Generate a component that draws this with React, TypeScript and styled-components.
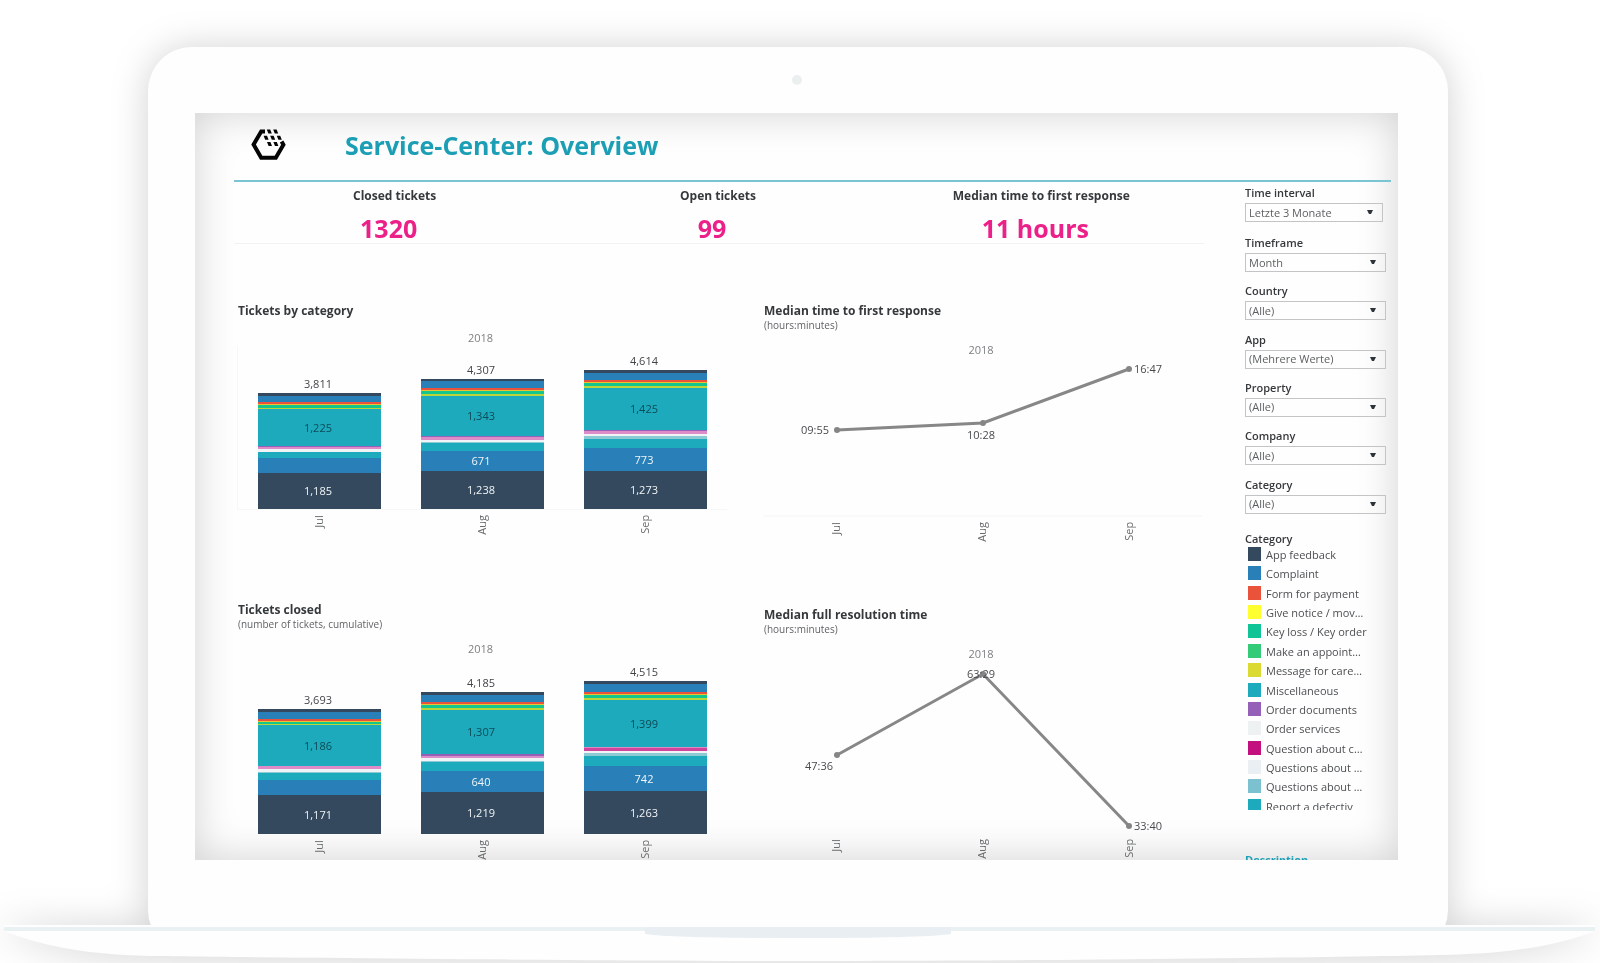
import React from "react";
import styled, { createGlobalStyle } from "styled-components";

const GlobalStyle = createGlobalStyle`
  *, *::before, *::after { box-sizing: border-box; }
  body {
    margin: 0;
    background: #fff;
    color: #36393c;
    font-family: "Open Sans", "Noto Sans", sans-serif;
    font-size: 11px;
    line-height: 16px;
  }
  h1, h2, h3, p, ul, dl, dd, figure { margin: 0; padding: 0; }
  ul { list-style: none; }
`;

/* ---------- laptop ---------- */

const Page = styled.div`
  min-height: 100vh;
  padding-top: 47px;
  overflow: hidden;
`;

const Laptop = styled.div`
  filter: drop-shadow(0 1px 18px rgba(0, 0, 0, 0.18));
`;

const Lid = styled.div`
  width: 81.25%;
  margin-left: 9.25%;
  padding: 28px 50px 94px 47px;
  border-radius: 44px;
  background: #fefefe;
`;

const Camera = styled.div`
  width: 10px;
  height: 10px;
  margin: 0 auto 28px;
  border-radius: 50%;
  background: #ebefef;
`;

const BaseDrawing = styled.svg`
  display: block;
  position: relative;
  width: 100%;
  margin-top: -29px;
`;

const Screen = styled.main`
  aspect-ratio: 1203 / 747;
  padding: 0 7px 0 39px;
  overflow: hidden;
  background: #fefefe;
  box-shadow: inset 0 0 40px rgba(0, 0, 0, 0.18);
`;

/* ---------- header and figures ---------- */

const Header = styled.header`
  display: flex;
  align-items: center;
  gap: 59px;
  height: 69px;
  padding: 0 0 4px 17px;
  border-bottom: 2px solid #7ac5d3;
`;

const Title = styled.h1`
  color: #1c9fb5;
  font-size: 25px;
  font-weight: 700;
  line-height: 36px;
`;

const Body = styled.div`
  display: flex;
  gap: 41px;
`;

const Content = styled.div`
  flex: 1;
  min-width: 0;
`;

const Kpis = styled.dl`
  display: grid;
  grid-template-columns: repeat(3, 1fr);
  height: 62px;
  border-bottom: 1px solid #f1f2f3;
`;

const Kpi = styled.div`
  padding-top: 5px;
  text-align: center;
`;

const KpiLabel = styled.dt`
  padding-right: 2px;
  font-size: 12px;
  font-weight: 700;
  line-height: 18px;
`;

const KpiValue = styled.dd`
  padding-top: 7px;
  padding-right: 14px;
  color: #ec2089;
  font-size: 25px;
  font-weight: 700;
  line-height: 32px;
`;

/* ---------- charts ---------- */

const Charts = styled.div`
  display: grid;
  grid-template-columns: 490fr 439fr;
  gap: 36px;
  padding: 58px 2px 0 3px;
`;

const Column = styled.div`
  display: flex;
  flex-direction: column;
`;

const Panel = styled.section<{ $height?: number }>`
  height: ${(p) => (p.$height ? `${p.$height}px` : "auto")};
`;

const PanelTitle = styled.h2`
  padding-left: 1px;
  font-size: 12px;
  font-weight: 700;
  line-height: 18px;
`;

const PanelNote = styled.p`
  padding-left: 1px;
  color: #606366;
  font-size: 10px;
  line-height: 11px;
`;

const Year = styled.p<{ $gap: number }>`
  padding-top: ${(p) => p.$gap}px;
  padding-right: 3px;
  color: #7d8082;
  text-align: center;
`;

const Plot = styled.div<{ $height: number; $framed?: boolean }>`
  display: grid;
  grid-template-columns: repeat(3, 1fr);
  align-items: end;
  height: ${(p) => p.$height}px;
  border: solid ${(p) => (p.$framed ? "#f6f7f7" : "transparent")};
  border-width: 0 0 1px 1px;
`;

const Stack = styled.div`
  display: flex;
  flex-direction: column;
  width: 75%;
  margin: 0 auto;
  text-align: center;
`;

const Total = styled.span`
  padding: 0 3px 1px 0;
  color: #424548;
`;

const Segment = styled.span<{ $color: string; $height: number; $ink?: string }>`
  height: ${(p) => p.$height}px;
  padding-right: 3px;
  background: ${(p) => p.$color};
  color: ${(p) => p.$ink};
  font-weight: 500;
  line-height: ${(p) => p.$height}px;
`;

const Months = styled.div`
  display: grid;
  grid-template-columns: repeat(3, 1fr);
  justify-items: center;
  padding-top: 5px;
  color: #696c6e;
`;

const Month = styled.span`
  writing-mode: vertical-rl;
  transform: rotate(180deg);
  text-align: right;
`;

const LinePlot = styled.svg`
  display: block;
  width: 100%;
  overflow: visible;
  fill: #484b4d;
  font-size: 11px;
`;

/* ---------- sidebar ---------- */

const Sidebar = styled.aside`
  width: 146px;
  padding-top: 3px;
`;

const FirstFilter = styled.div`
  width: 138px;
  height: 50px;
`;

const Filters = styled.div`
  display: grid;
  grid-auto-rows: 1fr;
  width: 141px;
  height: 290px;
`;

const FilterLabel = styled.label`
  display: block;
  padding-bottom: 3px;
  font-weight: 600;
  line-height: 15px;
`;

const SelectBox = styled.div`
  display: flex;
  align-items: center;
  position: relative;

  svg {
    position: absolute;
    right: 10px;
    pointer-events: none;
  }
`;

const Select = styled.select`
  width: 100%;
  height: 19px;
  padding: 0 20px 0 3px;
  appearance: none;
  border: 1px solid #c3c4c5;
  border-radius: 0;
  background: transparent;
  color: #5c5f61;
  font: 11px/16px "Open Sans", "Noto Sans", sans-serif;
`;

const LegendTitle = styled.h3`
  padding-top: 6px;
  font-size: 11px;
  font-weight: 600;
  line-height: 16px;
`;

const LegendWindow = styled.div`
  height: 263px;
  overflow: hidden;
`;

const LegendList = styled.ul`
  display: grid;
  grid-auto-rows: 1fr;
  height: 271px;
`;

const LegendItem = styled.li`
  display: flex;
  gap: 5px;
  padding-left: 3px;
  color: #4c4f51;
  line-height: 16px;
  white-space: nowrap;
`;

const Swatch = styled.span<{ $color: string }>`
  width: 13px;
  height: 14px;
  background: ${(p) => p.$color};
`;

const DescriptionLink = styled.a`
  display: block;
  margin-top: 42px;
  color: #1c9fb5;
  font-weight: 700;
  text-decoration: none;
`;

/* ---------- data ---------- */

const c = {
  navy: "#34495e",
  blue: "#2980b9",
  red: "#e8523c",
  orange: "#f0c030",
  green: "#14c58c",
  lime: "#b9d53a",
  teal: "#1daabc",
  violet: "#9560b8",
  pink: "#dd8cc8",
  magenta: "#d0449c",
  pale: "#f1f4f6",
  mist: "#8ccad4",
};

type Seg = [color: string, height: number, label?: string];
type Bar = { total: string; segments: Seg[] };

const byCategory: Bar[] = [
  {
    total: "3,811",
    segments: [
      [c.navy, 3], [c.blue, 6], [c.red, 2], [c.orange, 1], [c.green, 3], [c.lime, 1],
      [c.teal, 37, "1,225"], [c.violet, 1], [c.pink, 2], [c.pale, 3], [c.teal, 6],
      [c.blue, 15], [c.navy, 36, "1,185"],
    ],
  },
  {
    total: "4,307",
    segments: [
      [c.navy, 2], [c.blue, 7], [c.red, 2], [c.orange, 1], [c.green, 3], [c.lime, 2],
      [c.teal, 40, "1,343"], [c.violet, 1], [c.pink, 3], [c.pale, 2], [c.mist, 1],
      [c.teal, 8], [c.blue, 20, "671"], [c.navy, 38, "1,238"],
    ],
  },
  {
    total: "4,614",
    segments: [
      [c.navy, 3], [c.blue, 7], [c.red, 2], [c.orange, 1], [c.green, 3], [c.lime, 2],
      [c.teal, 42, "1,425"], [c.violet, 1], [c.pink, 3], [c.pale, 2], [c.mist, 3],
      [c.teal, 9], [c.blue, 23, "773"], [c.navy, 38, "1,273"],
    ],
  },
];

const closed: Bar[] = [
  {
    total: "3,693",
    segments: [
      [c.navy, 3], [c.blue, 7], [c.red, 2], [c.orange, 1], [c.green, 2], [c.lime, 1],
      [c.teal, 41, "1,186"], [c.pink, 3], [c.pale, 3], [c.mist, 1], [c.teal, 7],
      [c.blue, 15], [c.navy, 39, "1,171"],
    ],
  },
  {
    total: "4,185",
    segments: [
      [c.navy, 3], [c.blue, 7], [c.red, 2], [c.orange, 1], [c.green, 3], [c.lime, 2],
      [c.teal, 44, "1,307"], [c.violet, 2], [c.pink, 2], [c.pale, 3], [c.mist, 1],
      [c.teal, 9], [c.blue, 21, "640"], [c.navy, 42, "1,219"],
    ],
  },
  {
    total: "4,515",
    segments: [
      [c.navy, 3], [c.blue, 8], [c.red, 2], [c.orange, 1], [c.green, 3], [c.lime, 2],
      [c.teal, 47, "1,399"], [c.pink, 1], [c.magenta, 3], [c.pale, 2], [c.mist, 3],
      [c.teal, 10], [c.blue, 25, "742"], [c.navy, 43, "1,263"],
    ],
  },
];

const months = ["Jul", "Aug", "Sep"];

const kpis = [
  ["Closed tickets", "1320"],
  ["Open tickets", "99"],
  ["Median time to first response", "11 hours"],
];

const filters = [
  ["Timeframe", "Month"],
  ["Country", "(Alle)"],
  ["App", "(Mehrere Werte)"],
  ["Property", "(Alle)"],
  ["Company", "(Alle)"],
  ["Category", "(Alle)"],
];

const legend = [
  ["App feedback", c.navy],
  ["Complaint", c.blue],
  ["Form for payment", "#e9533b"],
  ["Give notice / mov…", "#ffff30"],
  ["Key loss / Key order", "#10c495"],
  ["Make an appoint…", "#34cb78"],
  ["Message for care…", "#dada32"],
  ["Miscellaneous", c.teal],
  ["Order documents", "#9560b8"],
  ["Order services", "#edf1f2"],
  ["Question about c…", "#c2107f"],
  ["Questions about …", "#e9eff2"],
  ["Questions about …", "#7cc1cf"],
  ["Report a defectiv", c.teal],
];

/* ---------- parts ---------- */

const Logo = () => (
  <svg width="35" height="33" viewBox="0 0 35 33" aria-hidden="true">
    <path d="M14 3.6H10.2L2.6 16.4L10.2 29.8H24.8L32.4 16.8L30.6 13.6" fill="none" stroke="#050505" strokeWidth="4" />
    <path
      d="M15.8 1.6h3.4l1.6 4h-3.4zM22.2 1.6h3.4l1.6 4h-3.4zM12.6 7.8h3.4l1.6 4h-3.4zM19.2 7.8h3.4l1.6 4h-3.4zM25.8 7.8h3.4l1.6 4h-3.4zM16 14h3.4l1.6 4h-3.4zM22.4 14h3.4l1.6 4h-3.4z"
      fill="#050505"
    />
  </svg>
);

const Base = () => (
  <BaseDrawing viewBox="0 0 1600 37" aria-hidden="true">
    <path d="M4 0H1595V6C1560 20 1510 29 1440 30C1300 33 1000 36 800 36C600 36 300 33 150 31C80 29 40 20 4 6Z" fill="#fefefe" />
    <path d="M4 2H1595V6H4Z" fill="#eaf1f2" />
    <path d="M645 2H951V9C930 12 880 13 798 13C716 13 666 12 645 9Z" fill="#e9eef2" />
  </BaseDrawing>
);

const Picker = ({ id, label, value }: { id: string; label: string; value: string }) => (
  <div>
    <FilterLabel htmlFor={id}>{label}</FilterLabel>
    <SelectBox>
      <Select id={id} defaultValue={value}>
        <option>{value}</option>
      </Select>
      <svg width="6" height="5" viewBox="0 0 6 5" aria-hidden="true">
        <path d="M0 0H6L4 4H2Z" fill="#2d3338" />
      </svg>
    </SelectBox>
  </div>
);

const MonthAxis = () => (
  <Months>
    {months.map((m) => (
      <Month key={m}>{m}</Month>
    ))}
  </Months>
);

const Bars = ({ bars, height, framed }: { bars: Bar[]; height: number; framed?: boolean }) => (
  <>
    <Plot $height={height} $framed={framed}>
      {bars.map((bar) => (
        <Stack key={bar.total}>
          <Total>{bar.total}</Total>
          {bar.segments.map(([color, h, label], i) => (
            <Segment key={i} $color={color} $height={h} $ink={color === c.teal ? "#0d4b57" : "#f1f5f7"}>
              {label}
            </Segment>
          ))}
        </Stack>
      ))}
    </Plot>
    <MonthAxis />
  </>
);

type Point = { x: number; y: number; label: string; lx: number; ly: number; anchor: "start" | "middle" | "end" };

const Line = ({ points, height, axis }: { points: Point[]; height: number; axis?: boolean }) => (
  <>
    <LinePlot viewBox={`0 0 439 ${height}`}>
      {axis && <path d={`M0 ${height - 1}H439`} stroke="#f4f5f5" />}
      <polyline points={points.map((p) => `${p.x},${p.y}`).join(" ")} fill="none" stroke="#878787" strokeWidth="3" />
      {points.map((p) => (
        <g key={p.label}>
          <circle cx={p.x} cy={p.y} r="3" fill="#858585" />
          <text x={p.lx} y={p.ly} textAnchor={p.anchor}>
            {p.label}
          </text>
        </g>
      ))}
    </LinePlot>
    <MonthAxis />
  </>
);

export default function App() {
  return (
    <Page>
      <GlobalStyle />
      <Laptop>
        <Lid>
          <Camera />
          <Screen>
            <Header>
              <Logo />
              <Title>Service-Center: Overview</Title>
            </Header>
            <Body>
              <Content>
                <Kpis>
                  {kpis.map(([label, value]) => (
                    <Kpi key={label}>
                      <KpiLabel>{label}</KpiLabel>
                      <KpiValue>{value}</KpiValue>
                    </Kpi>
                  ))}
                </Kpis>
                <Charts>
                  <Column>
                    <Panel $height={299}>
                      <PanelTitle>Tickets by category</PanelTitle>
                      <Year $gap={10}>2018</Year>
                      <Bars bars={byCategory} height={164} framed />
                    </Panel>
                    <Panel>
                      <PanelTitle>Tickets closed</PanelTitle>
                      <PanelNote>(number of tickets, cumulative)</PanelNote>
                      <Year $gap={11}>2018</Year>
                      <Bars bars={closed} height={178} />
                    </Panel>
                  </Column>
                  <Column>
                    <Panel $height={304}>
                      <PanelTitle>Median time to first response</PanelTitle>
                      <PanelNote>(hours:minutes)</PanelNote>
                      <Year $gap={11}>2018</Year>
                      <Line
                        axis
                        height={159}
                        points={[
                          { x: 74, y: 72, label: "09:55", lx: 66, ly: 76, anchor: "end" },
                          { x: 220, y: 65, label: "10:28", lx: 218, ly: 81, anchor: "middle" },
                          { x: 366, y: 11, label: "16:47", lx: 371, ly: 15, anchor: "start" },
                        ]}
                      />
                    </Panel>
                    <Panel>
                      <PanelTitle>Median full resolution time</PanelTitle>
                      <PanelNote>(hours:minutes)</PanelNote>
                      <Year $gap={11}>2018</Year>
                      <Line
                        height={172}
                        points={[
                          { x: 74, y: 93, label: "47:36", lx: 70, ly: 108, anchor: "end" },
                          { x: 220, y: 12, label: "63:29", lx: 218, ly: 16, anchor: "middle" },
                          { x: 366, y: 164, label: "33:40", lx: 371, ly: 168, anchor: "start" },
                        ]}
                      />
                    </Panel>
                  </Column>
                </Charts>
              </Content>
              <Sidebar>
                <FirstFilter>
                  <Picker id="interval" label="Time interval" value="Letzte 3 Monate" />
                </FirstFilter>
                <Filters>
                  {filters.map(([label, value]) => (
                    <Picker key={label} id={label.toLowerCase()} label={label} value={value} />
                  ))}
                </Filters>
                <LegendTitle>Category</LegendTitle>
                <LegendWindow>
                  <LegendList>
                    {legend.map(([label, color], i) => (
                      <LegendItem key={i}>
                        <Swatch $color={color} />
                        {label}
                      </LegendItem>
                    ))}
                  </LegendList>
                </LegendWindow>
                <DescriptionLink href="#description">Description</DescriptionLink>
              </Sidebar>
            </Body>
          </Screen>
        </Lid>
        <Base />
      </Laptop>
    </Page>
  );
}
